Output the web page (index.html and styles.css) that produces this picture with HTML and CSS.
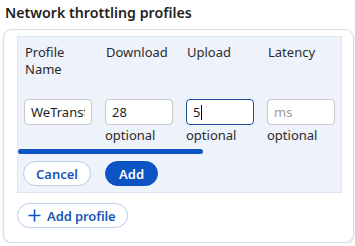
FILE: index.html
```html
<!DOCTYPE html>
<html>
<head>
<meta charset="utf-8">
<link rel="stylesheet" href="styles.css">
</head>
<body>
<h1 class="title">Network throttling profiles</h1>
<div class="card">
  <div class="panel">
    <div class="scroller">
      <div class="grid">
        <div class="head">Profile<br>Name</div>
        <div class="head">Download</div>
        <div class="head">Upload</div>
        <div class="head">Latency</div>
        <div class="cell"><input class="field" value="WeTransfer"></div>
        <div class="cell"><input class="field" value="28"><div class="hint">optional</div></div>
        <div class="cell"><div class="focus-wrap"><input class="field focused" value="5"><span class="caret"></span></div><div class="hint">optional</div></div>
        <div class="cell"><input class="field" placeholder="ms"><div class="hint">optional</div></div>
      </div>
      <div class="scrollbar"><div class="thumb"></div></div>
    </div>
    <div class="actions">
      <button class="btn outline">Cancel</button>
      <button class="btn primary">Add</button>
    </div>
  </div>
  <button class="btn outline add-profile">
    <svg width="13" height="13" viewBox="0 0 13 13"><path d="M6.5 0.5v12M0.5 6.5h12" stroke="#0c53c4" stroke-width="1.6" fill="none"/></svg>
    <span>Add profile</span>
  </button>
</div>
</body>
</html>
```
FILE: styles.css
```css
* { box-sizing: border-box; }
body {
  margin: 0;
  font-family: "Noto Sans", "Open Sans", sans-serif;
  color: #1f1f1f;
  background: #fff;
}
.title {
  margin: 0;
  padding: 3px 0 0 5px;
  height: 29px;
  font-size: 14.2px;
  font-weight: 600;
  line-height: 19px;
}
.card {
  margin-left: 3px;
  width: 351px;
  height: 214px;
  border: 1px solid #dcdcdc;
  border-radius: 9px;
  box-shadow: 0 1px 2px rgba(0,0,0,0.18);
  padding: 6px 11px 0 13px;
}
.panel {
  background: #eef2fa;
  border: 1px solid #dde4f2;
  height: 157px;
}
.scroller {
  overflow: hidden;
}
.grid {
  display: grid;
  grid-template-columns: repeat(4, 68px);
  column-gap: 13px;
  padding-left: 6px;
  width: 600px;
}
.head {
  font-size: 13px;
  line-height: 17px;
  padding: 7px 0 0 1px;
  height: 62px;
  color: #2b2b2b;
}
.cell { display: flex; flex-direction: column; }
.field {
  width: 68px;
  height: 26px;
  border: 1px solid #c9c9c9;
  border-radius: 4px;
  background: #fff;
  font-family: inherit;
  font-size: 13px;
  padding: 0 6px;
  color: #1f1f1f;
  outline: none;
}
.field::placeholder { color: #9a9a9a; }
.field.focused {
  border: 1.5px solid #1b4f9e;
  padding-left: 6px;
}
.focus-wrap { position: relative; width: 68px; height: 26px; }
.caret {
  position: absolute;
  left: 15px;
  top: 6px;
  width: 1px;
  height: 15px;
  background: #000;
}
.hint {
  font-size: 13px;
  line-height: 17px;
  padding-top: 2px;
  color: #2b2b2b;
}
.scrollbar {
  height: 5px;
  margin-top: 5px;
}
.thumb {
  width: 185px;
  height: 5px;
  border-radius: 3px;
  background: #0c53c4;
}
.actions {
  display: flex;
  gap: 14px;
  padding: 7px 0 0 5px;
}
.btn {
  font-family: inherit;
  font-size: 13px;
  font-weight: 600;
  height: 25px;
  border-radius: 13px;
  padding: 0 12px;
  cursor: pointer;
  display: inline-flex;
  align-items: center;
}
.btn.outline {
  background: #fff;
  border: 1px solid #b9cbe8;
  color: #1a56b8;
}
.btn.primary {
  background: #0c53c4;
  border: 1px solid #0c53c4;
  color: #fff;
  padding: 0 13px;
}
.add-profile {
  margin-top: 10px;
  height: 25px;
  font-size: 13px;
  letter-spacing: -0.1px;
  gap: 6px;
  padding: 0 11px 0 10px;
}
```
